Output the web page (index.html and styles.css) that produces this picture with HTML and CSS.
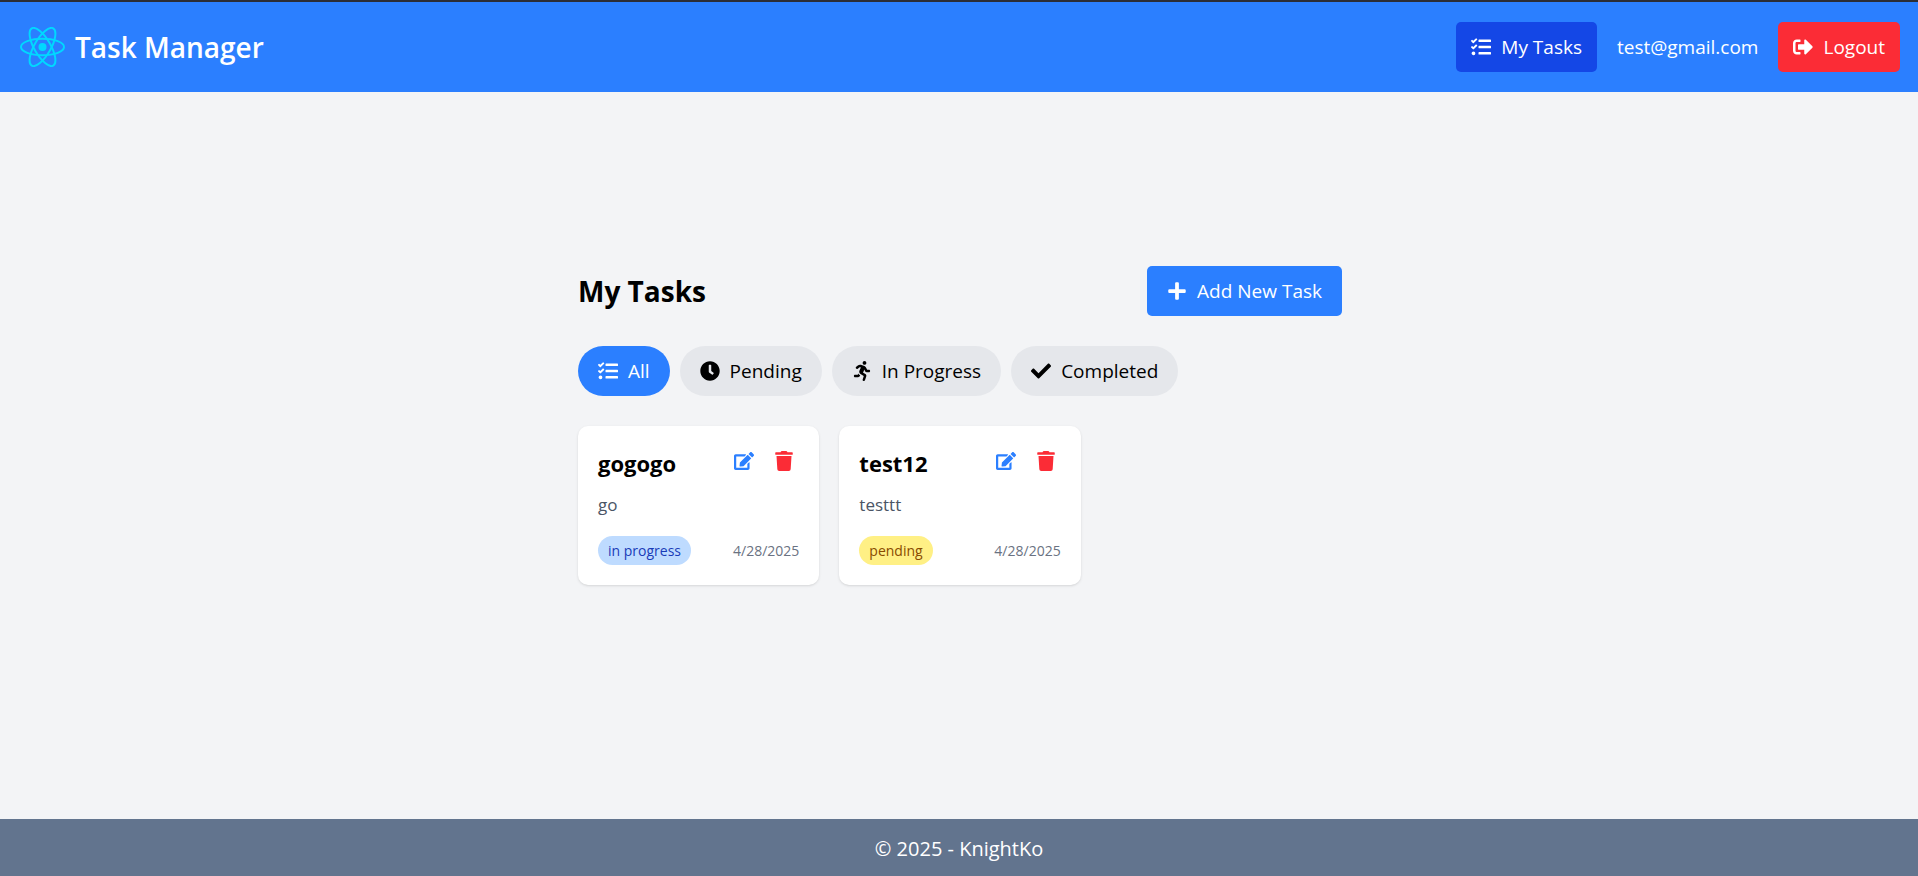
FILE: index.html
```
<!DOCTYPE html>
<html lang="en">
<head>
<meta charset="utf-8">
<meta name="viewport" content="width=device-width, initial-scale=1">
<title>Task Manager</title>
<link rel="stylesheet" href="styles.css">
</head>
<body>
<svg class="sprite" aria-hidden="true">
  <symbol id="i-tasks" viewBox="0 0 512 512"><path d="M139.61 35.5a12 12 0 0 0-17 0L58.93 98.81l-22.7-22.12a12 12 0 0 0-17 0L3.53 92.41a12 12 0 0 0 0 17l47.59 47.4a12.78 12.78 0 0 0 17.61 0l15.59-15.62L156.52 69a12.09 12.09 0 0 0 .09-17zm0 159.19a12 12 0 0 0-17 0l-63.68 63.72-22.7-22.1a12 12 0 0 0-17 0L3.53 252a12 12 0 0 0 0 17L51 316.5a12.77 12.77 0 0 0 17.6 0l15.7-15.69 72.2-72.22a12 12 0 0 0 .09-16.9zM64 368c-26.49 0-48.59 21.5-48.59 48S37.53 464 64 464a48 48 0 0 0 0-96zm432 16H208a16 16 0 0 0-16 16v32a16 16 0 0 0 16 16h288a16 16 0 0 0 16-16v-32a16 16 0 0 0-16-16zm0-320H208a16 16 0 0 0-16 16v32a16 16 0 0 0 16 16h288a16 16 0 0 0 16-16V80a16 16 0 0 0-16-16zm0 160H208a16 16 0 0 0-16 16v32a16 16 0 0 0 16 16h288a16 16 0 0 0 16-16v-32a16 16 0 0 0-16-16z"/></symbol>
  <symbol id="i-logout" viewBox="0 0 512 512"><path d="M497 273L329 441c-15 15-41 4.5-41-17v-96H152c-13.3 0-24-10.7-24-24v-96c0-13.3 10.7-24 24-24h136V88c0-21.4 25.9-32 41-17l168 168c9.3 9.4 9.3 24.6 0 34zM192 436v-40c0-6.6-5.4-12-12-12H96c-17.7 0-32-14.3-32-32V160c0-17.7 14.3-32 32-32h84c6.6 0 12-5.4 12-12V76c0-6.6-5.4-12-12-12H96c-53 0-96 43-96 96v192c0 53 43 96 96 96h84c6.6 0 12-5.4 12-12z"/></symbol>
  <symbol id="i-plus" viewBox="0 0 448 512"><path d="M416 208H272V64c0-17.67-14.33-32-32-32h-32c-17.67 0-32 14.33-32 32v144H32c-17.67 0-32 14.33-32 32v32c0 17.67 14.33 32 32 32h144v144c0 17.67 14.33 32 32 32h32c17.67 0 32-14.33 32-32V304h144c17.67 0 32-14.33 32-32v-32c0-17.67-14.33-32-32-32z"/></symbol>
  <symbol id="i-clock" viewBox="0 0 512 512"><path d="M256,8C119,8,8,119,8,256S119,504,256,504,504,393,504,256,393,8,256,8Zm92.49,313h0l-20,25a16,16,0,0,1-22.49,2.5h0l-67-49.72a40,40,0,0,1-15-31.23V112a16,16,0,0,1,16-16h32a16,16,0,0,1,16,16V256l58,42.5A16,16,0,0,1,348.49,321Z"/></symbol>
  <symbol id="i-run" viewBox="0 0 416 512"><path d="M272 96c26.51 0 48-21.49 48-48S298.51 0 272 0s-48 21.49-48 48 21.49 48 48 48zM113.69 317.47l-14.8 34.52H32c-17.67 0-32 14.33-32 32s14.33 32 32 32h77.45c19.25 0 36.58-11.44 44.11-29.09l8.79-20.52-10.67-6.3c-17.32-10.23-30.06-25.37-37.99-42.61zM384 223.99h-44.03l-26.06-53.25c-12.5-25.55-35.45-44.23-61.78-50.94l-71.08-21.14c-28.3-6.8-57.77-.55-80.84 17.14l-39.67 30.41c-14.03 10.75-16.69 30.83-5.92 44.86s30.84 16.66 44.86 5.92l39.69-30.41c7.67-5.89 17.44-8 25.27-6.14l14.7 4.37-37.46 87.39c-12.62 29.48-1.31 64.01 26.3 80.31l84.98 50.17-27.47 87.73c-5.28 16.86 4.11 34.82 20.97 40.09 3.19 1 6.41 1.48 9.58 1.48 13.61 0 26.23-8.77 30.52-22.45l31.64-101.06c5.91-20.77-2.89-43.08-21.64-54.39l-61.24-36.14 31.31-78.28 20.27 41.43c8 16.34 24.92 26.89 43.11 26.89H384c17.67 0 32-14.33 32-32s-14.33-31.99-32-31.99z"/></symbol>
  <symbol id="i-check" viewBox="0 0 512 512"><path d="M173.898 439.404l-166.4-166.4c-9.997-9.997-9.997-26.206 0-36.204l36.203-36.204c9.997-9.998 26.207-9.998 36.204 0L192 312.69 432.095 72.596c9.997-9.997 26.207-9.997 36.204 0l36.203 36.204c9.997 9.997 9.997 26.206 0 36.204l-294.4 294.401c-9.998 9.997-26.207 9.997-36.204-.001z"/></symbol>
  <symbol id="i-edit" viewBox="0 0 576 512"><path d="M402.6 83.2l90.2 90.2c3.8 3.8 3.8 10 0 13.8L274.4 405.6l-92.8 10.3c-12.4 1.4-22.9-9.1-21.5-21.5l10.3-92.8L388.8 83.2c3.8-3.8 10-3.8 13.8 0zm162-22.9l-48.8-48.8c-15.2-15.2-39.9-15.2-55.2 0l-35.4 35.4c-3.8 3.8-3.8 10 0 13.8l90.2 90.2c3.8 3.8 10 3.8 13.8 0l35.4-35.4c15.2-15.3 15.2-40 0-55.2zM384 346.2V448H64V128h229.8c3.2 0 6.2-1.3 8.5-3.5l40-40c7.6-7.6 2.2-20.5-8.5-20.5H48C21.5 64 0 85.5 0 112v352c0 26.5 21.5 48 48 48h352c26.5 0 48-21.5 48-48V306.2c0-10.7-12.9-16-20.5-8.5l-40 40c-2.2 2.3-3.5 5.3-3.5 8.5z"/></symbol>
  <symbol id="i-trash" viewBox="0 0 448 512"><path d="M432 32H312l-9.4-18.7A24 24 0 0 0 281.1 0H166.8a23.72 23.72 0 0 0-21.4 13.3L136 32H16A16 16 0 0 0 0 48v32a16 16 0 0 0 16 16h416a16 16 0 0 0 16-16V48a16 16 0 0 0-16-16zM53.2 467a48 48 0 0 0 47.9 45h245.8a48 48 0 0 0 47.9-45L416 128H32z"/></symbol>
</svg>

<header class="topbar">
  <a class="brand" href="#">
    <svg class="brand-logo" viewBox="-11.5 -10.23 23 20.46" aria-hidden="true">
      <circle r="2.05" fill="#00d8ff"/>
      <g fill="none" stroke="#00d8ff">
        <ellipse rx="11" ry="4.2"/>
        <ellipse rx="11" ry="4.2" transform="rotate(60)"/>
        <ellipse rx="11" ry="4.2" transform="rotate(120)"/>
      </g>
    </svg>
    Task Manager
  </a>
  <nav class="nav">
    <a class="btn btn-nav" href="#"><svg class="icon"><use href="#i-tasks"/></svg>My Tasks</a>
    <span class="user">test@gmail.com</span>
    <button class="btn btn-logout" type="button"><svg class="icon"><use href="#i-logout"/></svg>Logout</button>
  </nav>
</header>

<main class="main">
  <div class="board">
    <div class="board-head">
      <h1 class="board-title">My Tasks</h1>
      <button class="btn btn-add" type="button"><svg class="icon"><use href="#i-plus"/></svg>Add New Task</button>
    </div>
    <div class="filters">
      <button class="filter filter-active" type="button"><svg class="icon"><use href="#i-tasks"/></svg>All</button>
      <button class="filter" type="button"><svg class="icon"><use href="#i-clock"/></svg>Pending</button>
      <button class="filter" type="button"><svg class="icon"><use href="#i-run"/></svg>In Progress</button>
      <button class="filter" type="button"><svg class="icon"><use href="#i-check"/></svg>Completed</button>
    </div>
    <div class="cards">
      <article class="card">
        <div class="card-head">
          <h2 class="card-title">gogogo</h2>
          <div class="card-actions">
            <button class="icon-btn icon-btn-edit" type="button" aria-label="Edit task"><svg class="icon"><use href="#i-edit"/></svg></button>
            <button class="icon-btn icon-btn-delete" type="button" aria-label="Delete task"><svg class="icon"><use href="#i-trash"/></svg></button>
          </div>
        </div>
        <p class="card-text">go</p>
        <div class="card-foot">
          <span class="badge badge-progress">in progress</span>
          <time class="card-date" datetime="2025-04-28">4/28/2025</time>
        </div>
      </article>
      <article class="card">
        <div class="card-head">
          <h2 class="card-title">test12</h2>
          <div class="card-actions">
            <button class="icon-btn icon-btn-edit" type="button" aria-label="Edit task"><svg class="icon"><use href="#i-edit"/></svg></button>
            <button class="icon-btn icon-btn-delete" type="button" aria-label="Delete task"><svg class="icon"><use href="#i-trash"/></svg></button>
          </div>
        </div>
        <p class="card-text">testtt</p>
        <div class="card-foot">
          <span class="badge badge-pending">pending</span>
          <time class="card-date" datetime="2025-04-28">4/28/2025</time>
        </div>
      </article>
    </div>
  </div>
</main>

<footer class="footer">© 2025 - KnightKo</footer>
</body>
</html>
```

FILE: styles.css
```
* {
  box-sizing: border-box;
  margin: 0;
}

body {
  display: flex;
  flex-direction: column;
  min-height: 100vh;
  background: #f3f4f6;
  color: #000;
  font: 19px/30px "Segoe UI", "Open Sans", "Noto Sans", sans-serif;
}

button {
  border: 0;
  background: none;
  color: inherit;
  font: inherit;
  cursor: pointer;
}

a {
  color: inherit;
  text-decoration: none;
}

.sprite {
  display: none;
}

.icon {
  display: block;
  flex: none;
  width: 20px;
  height: 20px;
  fill: currentColor;
}

.topbar {
  display: flex;
  align-items: center;
  justify-content: space-between;
  padding: 20px 18px 20px 20px;
  border-top: 2px solid #2b2d36;
  background: #2b7fff;
  color: #fff;
}

.brand {
  display: flex;
  align-items: center;
  gap: 10px;
  font-size: 28px;
  font-weight: 600;
}

.brand-logo {
  width: 45px;
  height: 40px;
}

.nav {
  display: flex;
  align-items: center;
  gap: 20px;
}

.btn {
  display: flex;
  align-items: center;
  gap: 10px;
  padding: 10px 15px;
  border-radius: 5px;
  color: #fff;
}

.btn-nav {
  background: #1447e6;
}

.btn-logout {
  background: #fb2c36;
}

.btn-add {
  padding: 10px 20px;
  background: #2b7fff;
}

.main {
  display: flex;
  flex: 1;
  align-items: center;
  justify-content: center;
  padding: 0 20px 60px 22px;
}

.board {
  width: 100%;
  max-width: 764px;
}

.board-head {
  display: flex;
  align-items: center;
  justify-content: space-between;
  margin-bottom: 30px;
}

.board-title {
  font-size: 28px;
  font-weight: 700;
  line-height: 32px;
}

.filters {
  display: flex;
  flex-wrap: wrap;
  gap: 10px;
  margin-bottom: 30px;
}

.filter {
  display: flex;
  align-items: center;
  gap: 10px;
  padding: 10px 20px;
  border-radius: 25px;
  background: #e5e7eb;
}

.filter-active {
  background: #2b7fff;
  color: #fff;
}

.cards {
  display: grid;
  grid-template-columns: repeat(3, 1fr);
  gap: 20px;
}

.card {
  padding: 20px;
  border-radius: 10px;
  background: #fff;
  box-shadow: 0 1px 3px rgba(0, 0, 0, 0.1), 0 1px 2px -1px rgba(0, 0, 0, 0.1);
}

.card-head {
  display: flex;
  align-items: flex-start;
  justify-content: space-between;
  margin-bottom: 10px;
}

.card-title {
  font-size: 22px;
  font-weight: 700;
  line-height: 35px;
}

.card-actions {
  display: flex;
  gap: 10px;
}

.icon-btn {
  padding: 5px;
}

.icon-btn-edit {
  color: #2b7fff;
}

.icon-btn-delete {
  color: #fb2c36;
}

.card-text {
  margin-bottom: 17px;
  color: #4a5565;
  font-size: 17px;
  line-height: 28px;
}

.card-foot {
  display: flex;
  align-items: center;
  justify-content: space-between;
  font-size: 14px;
  line-height: 19px;
}

.badge {
  padding: 5px 10px;
  border-radius: 15px;
}

.badge-progress {
  background: #bedbff;
  color: #193cb8;
}

.badge-pending {
  background: #fff085;
  color: #894b00;
}

.card-date {
  color: #6a7282;
}

.footer {
  padding: 15px 15px 12px;
  background: #62748e;
  color: #fff;
  font-size: 20px;
  text-align: center;
}
```
